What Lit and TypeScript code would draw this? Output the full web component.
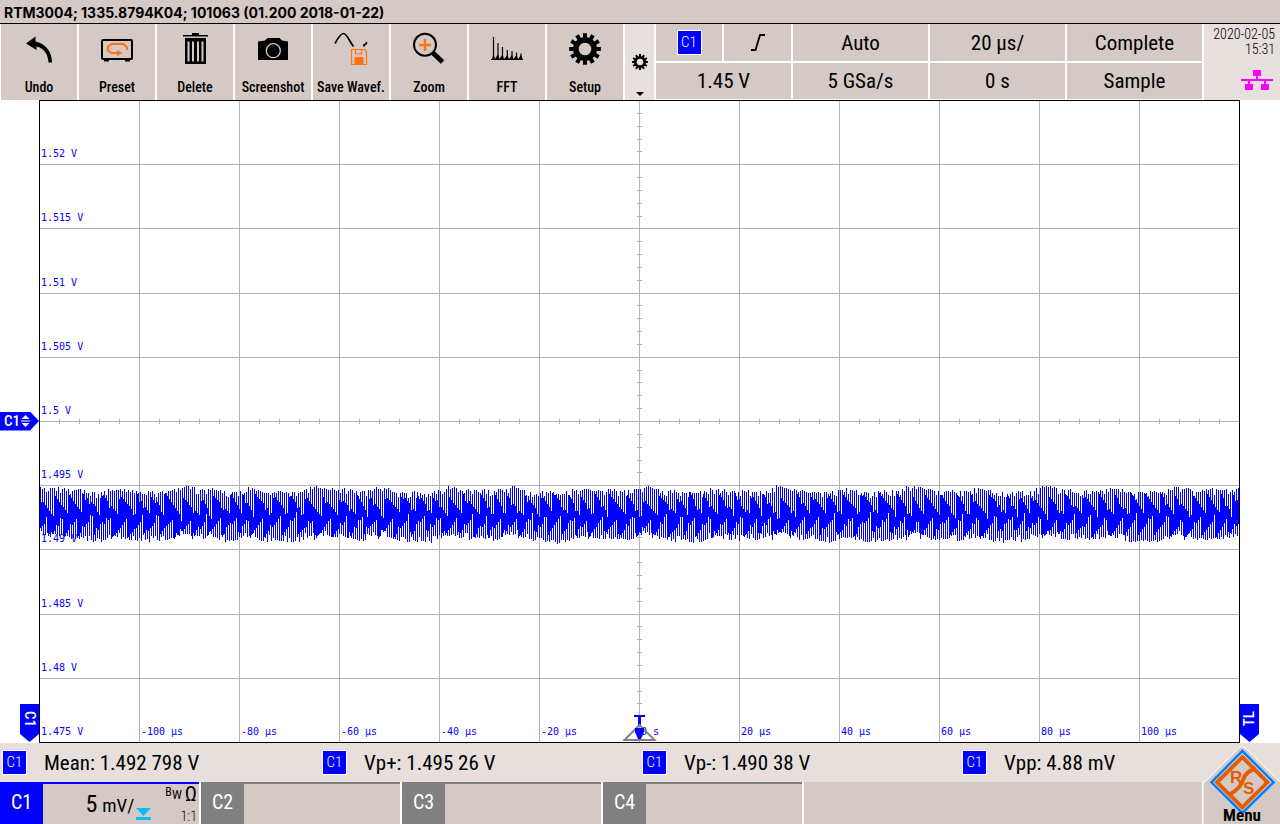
import { LitElement, html, svg, css } from "lit";
import { customElement } from "lit/decorators.js";

const PLOT_W = 1201;
const PLOT_H = 643;
const DIV_X = 100;
const DIV_Y = 64.2;

const range = (n: number) => Array.from({ length: n }, (_, i) => i);

/* Switching ripple: every other column is a full swing, the ones between follow a sawtooth beat. */
function wavePath(): string {
  let d = "";
  let seed = 7;
  const rnd = () => {
    seed = (seed * 16807) % 2147483647;
    return seed / 2147483647;
  };
  let phase = 0;
  let step = 1 / 15;
  for (let x = 1; x < PLOT_W - 1; x++) {
    const slow = 2.5 * Math.sin(x / 10.5) + 2 * Math.sin(x / 23 + 1) + 1.5 * Math.sin(x / 5.3);
    phase += step;
    if (phase >= 1) {
      phase = 0;
      step = 1 / (11 + rnd() * 7);
    }
    const late = (phase + 0.45) % 1;
    let top: number;
    let bottom: number;
    if (x % 2) {
      top = 389 - slow * 0.7 + rnd() * 3;
      bottom = 438 - late * 21 + slow * 0.5;
    } else {
      top = 394 + phase * 21 + slow * 0.5;
      bottom = 437 - slow * 0.9 + rnd() * 3;
    }
    if (rnd() < 0.25) {
      top += 4;
      bottom -= 4;
    }
    d += `M${x + 0.5} ${Math.round(Math.max(top, 384))}V${Math.round(Math.min(bottom, 444))}`;
  }
  return d;
}

function gearPath(c: number, outer: number, inner: number, hole: number): string {
  const teeth = 12;
  const pts: string[] = [];
  for (let i = 0; i < teeth; i++) {
    const a = (i * 2 * Math.PI) / teeth - Math.PI / 2;
    for (const [off, r] of [[-0.16, inner], [-0.13, outer], [0.13, outer], [0.16, inner]]) {
      pts.push(`${(c + r * Math.cos(a + off)).toFixed(2)} ${(c + r * Math.sin(a + off)).toFixed(2)}`);
    }
  }
  return `M${pts.join("L")}ZM${c - hole} ${c}a${hole} ${hole} 0 1 0 ${2 * hole} 0a${hole} ${hole} 0 1 0 ${-2 * hole} 0Z`;
}

const icons: Record<string, unknown> = {
  Undo: svg`<path d="M11 17.500L20.500 10.500V15.500C30 17.500 37 25 37 36.500H33.500C33 28 29 22 21.500 20.500V24Z" fill="#000"/>`,
  Preset: svg`
    <rect x="9" y="14" width="30" height="19" rx="1" fill="none" stroke="#000" stroke-width="2"/>
    <path d="M11 33h5v2.500h-5zM32 33h5v2.500h-5z" fill="#000"/>
    <path d="M34 24V21.500L30.500 18H19L14.800 20.500V24.500L18.500 27H25" fill="none" stroke="#ff7310" stroke-width="2"/>
    <path d="M24 24L29.500 27L24 30Z" fill="#ff7310"/>`,
  Delete: svg`
    <path d="M12 9H21V7H28V9H37V10.500H12Z" fill="#000"/>
    <path fill-rule="evenodd" d="M14 12H35V38H14ZM16.500 15.500V35.500H18.500V15.500ZM21 15.500V35.500H23V15.500ZM26 15.500V35.500H28V15.500ZM30.500 15.500V35.500H32.500V15.500Z" fill="#000"/>`,
  Screenshot: svg`
    <path d="M9 15.500L16 14.500L18.500 12H30.500L33 14.500L39 15.500V34H9Z" fill="#000"/>
    <circle cx="24.300" cy="24.700" r="7" fill="none" stroke="#d4c9c4" stroke-width="1.300"/>`,
  "Save Wavef.": svg`
    <path d="M8 17.500C12 10 14 7.500 16.500 7.500C20 7.500 22 15 26.500 20.500M36.500 20.500L37.500 18.500L39 18L39.700 16" fill="none" stroke="#000" stroke-width="1.700"/>
    <path d="M24.500 23.500H37.500L39.500 25.500V38.500H24.500ZM28.500 23.500V28H34.500V23.500" fill="none" stroke="#ff7310" stroke-width="1.200"/>
    <path d="M27.500 31H36.500V38H27.500Z" fill="#ff7310"/>`,
  Zoom: svg`
    <circle cx="20" cy="18.700" r="11" fill="none" stroke="#000" stroke-width="2"/>
    <path d="M20 13V25M14 19H26" stroke="#ff7310" stroke-width="2.500"/>
    <path d="M27.500 26.500L37.500 36" stroke="#000" stroke-width="5"/>`,
  FFT: svg`
    <path d="M8 33.500H40M10.500 11V33M15 17V33M19.500 21V33M24.300 24V33M29 25V33M33.500 26.500V33M38 27.500V33" stroke="#000" stroke-width="1.200"/>
    <path d="M9 33L10.500 28L12 33L15 28L16.500 33L19.500 28L21 33L24.300 29L26 33L29 29L30.500 33L33.500 29L35 33L38 29L39.500 33Z" fill="#000"/>`,
  Setup: svg`<path d="${gearPath(24, 16, 12, 6.3)}" transform="translate(0 -1)" fill="#000" fill-rule="evenodd"/>`,
};

@customElement("app-root")
export class AppRoot extends LitElement {
  static styles = css`
    :host {
      --panel: #d4c9c4;
      --light: #e6dfdc;
      --blue: #0000ff;
      display: flex;
      flex-direction: column;
      min-height: 100vh;
      background: #fff;
      color: #000;
      font-family: "Roboto Condensed", Roboto, "Liberation Sans", sans-serif;
    }
    * { box-sizing: border-box; }
    svg { display: block; }
    button {
      appearance: none;
      border: 0;
      margin: 0;
      padding: 0;
      border-radius: 0;
      background: var(--panel);
      color: inherit;
      font-family: inherit;
    }
    .title {
      margin: 0;
      height: 24px;
      padding: 2px 4px 0;
      background: var(--panel);
      border-bottom: 1px solid #000;
      font: 700 14px/22px Inter, "Liberation Sans", Arial, sans-serif;
      white-space: nowrap;
    }
    .toolbar {
      display: grid;
      grid-template-columns: repeat(8, 76fr) 29px 546fr 76px;
      column-gap: 2px;
      height: 76px;
      padding-left: 1px;
    }
    .tool {
      display: flex;
      flex-direction: column;
      align-items: center;
      padding-top: 2px;
      min-width: 0;
      font-size: 14px;
      font-weight: 500;
      line-height: 26px;
      white-space: nowrap;
    }
    .more {
      display: flex;
      flex-direction: column;
      align-items: center;
      justify-content: flex-end;
      gap: 22px;
      padding-bottom: 4px;
      background: var(--light);
    }
    .params {
      display: grid;
      grid-template-columns: repeat(4, 1fr);
      grid-template-rows: 37px 36px;
      gap: 2px;
    }
    .params button { font-size: 21px; line-height: 36px; }
    .split {
      display: grid;
      grid-template-columns: 66fr 67fr;
      gap: 2px;
    }
    .split button {
      display: flex;
      align-items: center;
      justify-content: center;
    }
    .badge {
      display: block;
      width: 25px;
      height: 25px;
      border: 1px solid #fff;
      background: var(--blue);
      color: #fff;
      font-size: 15px;
      font-weight: 300;
      line-height: 23px;
      text-align: center;
      flex: none;
    }
    .params .badge { font-size: 15px; line-height: 23px; }
    .status {
      display: flex;
      flex-direction: column;
      align-items: flex-end;
      padding: 3px 5px 0 0;
      background: var(--light);
      font-size: 14px;
      font-weight: 300;
      line-height: 15px;
      white-space: nowrap;
    }
    .lan { margin: 13px 2px 0 0; }
    .scope {
      flex: 1;
      display: grid;
      grid-template-columns: 39px 1fr 40px;
      min-height: 300px;
    }
    .side { position: relative; }
    .level {
      position: absolute;
      left: 0;
      top: 50%;
      width: 39px;
      height: 19px;
      margin-top: -10px;
      padding-left: 4px;
      display: flex;
      align-items: center;
      gap: 1px;
      background: var(--blue);
      clip-path: polygon(0 0, 30px 0, 100% 50%, 30px 100%, 0 100%);
      color: #fff;
      font-size: 15px;
      font-weight: 500;
    }
    .flag {
      position: absolute;
      bottom: 1px;
      width: 19px;
      height: 38px;
      padding-bottom: 8px;
      background: var(--blue);
      clip-path: polygon(0 0, 100% 0, 100% 30px, 50% 100%, 0 30px);
      color: #fff;
      display: flex;
      align-items: center;
      justify-content: center;
      font-size: 15px;
      font-weight: 500;
      line-height: 19px;
    }
    .flag.left { right: 0; }
    .flag.right { left: 0; }
    .vertical { writing-mode: vertical-rl; }
    .vertical.up { transform: rotate(180deg); }
    .plot { position: relative; }
    .layer {
      position: absolute;
      inset: 0;
      width: 100%;
      height: 100%;
    }
    .labels {
      display: grid;
      padding: 0 1px 1px 0;
      color: var(--blue);
      font: 10px/20px "DejaVu Sans Mono", monospace;
      white-space: pre;
    }
    .labels span { align-self: end; padding-left: 2px; }
    .volts { grid-template-rows: repeat(10, 1fr); }
    .times { grid-template-columns: repeat(12, 1fr); }
    .trigger {
      position: absolute;
      left: calc(50% - 17px);
      bottom: 0;
    }
    .measures {
      display: grid;
      grid-template-columns: repeat(4, 1fr);
      height: 39px;
      background: var(--light);
    }
    .measure {
      display: flex;
      align-items: center;
      gap: 17px;
      padding-left: 2px;
      font-size: 21px;
      line-height: 38px;
      white-space: nowrap;
    }
    .measure .badge { line-height: 23px; }
    .channels {
      display: grid;
      grid-template-columns: repeat(4, 199fr) 398fr 76px;
      grid-template-rows: 42px;
      gap: 2px;
    }
    .channel {
      --accent: #808080;
      display: flex;
      border-top: 2px solid var(--accent);
      text-align: left;
      min-width: 0;
    }
    .channel.on { --accent: var(--blue); }
    .name {
      align-self: stretch;
      width: 43px;
      background: var(--accent);
      color: #fff;
      font-size: 20px;
      line-height: 37px;
      text-align: center;
    }
    .scale {
      flex: 1;
      display: flex;
      align-items: baseline;
      justify-content: flex-end;
      gap: 5px;
      font-size: 24px;
      line-height: 40px;
    }
    .scale small { font-size: 19px; }
    .offset { align-self: flex-end; margin: 0 14px 4px 2px; }
    .coupling {
      display: flex;
      flex-direction: column;
      align-items: flex-end;
      padding-right: 2px;
      font-size: 14px;
      font-weight: 300;
      line-height: 16px;
    }
    .coupling .row {
      display: flex;
      align-items: flex-start;
      gap: 3px;
      height: 24px;
    }
    .bw { font-size: 12px; font-weight: 400; line-height: 16px; }
    .bw sub { font-size: 13px; line-height: 0; }
    .ohm { font-size: 21px; font-weight: 400; line-height: 20px; }
    .blank { background: var(--panel); }
    .menu {
      position: relative;
      font-size: 17px;
      font-weight: bold;
      line-height: 17px;
    }
    .emblem { position: absolute; right: 0; bottom: 0; }
    .menu span {
      position: absolute;
      left: 0;
      right: 0;
      bottom: 0;
    }
  `;

  private wave = wavePath();

  private grid() {
    const cx = 600.5;
    const cy = 321.5;
    return svg`
      <g stroke="#b2b2b2" stroke-width="1" shape-rendering="crispEdges">
        ${range(11).map((i) => svg`<line x1=${(i + 1) * DIV_X + 0.5} x2=${(i + 1) * DIV_X + 0.5} y1="0" y2=${PLOT_H}/>`)}
        ${range(9).map((i) => {
          const y = Math.round((i + 1) * DIV_Y) + 0.5;
          return svg`<line x1="0" x2=${PLOT_W} y1=${y} y2=${y}/>`;
        })}
        ${range(59).map((i) => svg`<line x1=${(i + 1) * 20 + 0.5} x2=${(i + 1) * 20 + 0.5} y1=${cy - 2.5} y2=${cy + 2.5}/>`)}
        ${range(49).map((i) => {
          const y = Math.round((i + 1) * 12.84) + 0.5;
          return svg`<line x1=${cx - 2.5} x2=${cx + 2.5} y1=${y} y2=${y}/>`;
        })}
      </g>`;
  }

  private tool(label: string) {
    return html`<button class="tool">
      <svg width="48" height="48" viewBox="0 0 48 48" aria-hidden="true">${icons[label]}</svg>
      <span>${label}</span>
    </button>`;
  }

  private channel(name: string) {
    return html`<button class="channel"><span class="name">${name}</span></button>`;
  }

  render() {
    const volts = ["1.52", "1.515", "1.51", "1.505", "1.5", "1.495", "1.49", "1.485", "1.48", "1.475"];
    const times = ["", "-100 µs", "-80 µs", "-60 µs", "-40 µs", "-20 µs", "0 s", "20 µs", "40 µs", "60 µs", "80 µs", "100 µs"];
    const measures = ["Mean: 1.492 798 V", "Vp+: 1.495 26 V", "Vp-: 1.490 38 V", "Vpp: 4.88 mV"];
    return html`
      <h1 class="title">RTM3004; 1335.8794K04; 101063 (01.200 2018-01-22)</h1>
      <div class="toolbar">
        ${Object.keys(icons).map((k) => this.tool(k))}
        <button class="more" aria-label="Toolbar settings">
          <svg width="16" height="16" viewBox="0 0 16 16"><path d="${gearPath(8, 8, 6, 3.3)}" fill-rule="evenodd"/></svg>
          <svg width="8" height="4" viewBox="0 0 8 4"><path d="M0 0H8L4 4Z"/></svg>
        </button>
        <div class="params">
          <div class="split">
            <button aria-label="Trigger source"><span class="badge">C1</span></button>
            <button aria-label="Trigger slope">
              <svg width="14" height="17" viewBox="0 0 14 17">
                <path d="M0 16H4.500L9 1H14" fill="none" stroke="#000" stroke-width="1.800"/>
              </svg>
            </button>
          </div>
          <button>Auto</button>
          <button>20 µs/</button>
          <button>Complete</button>
          <button>1.45 V</button>
          <button>5 GSa/s</button>
          <button>0 s</button>
          <button>Sample</button>
        </div>
        <div class="status">
          <span>2020-02-05</span>
          <span>15:31</span>
          <svg class="lan" width="32" height="20" viewBox="0 0 32 20" aria-hidden="true">
            <path fill="#ff00ff" d="M12 0h8v6h-3v3h15v2h-7v3h3v6h-8v-6h3v-3H9v3h3v6H4v-6h3v-3H0V9h15V6h-3z"/>
          </svg>
        </div>
      </div>

      <main class="scope">
        <div class="side">
          <button class="level">C1
            <svg width="9" height="12" viewBox="0 0 9 12"><path d="M4.500 0L8.500 4H0.500ZM4.500 12L0.500 8H8.500ZM0 5.500H9V6.500H0Z" fill="#fff"/></svg>
          </button>
          <button class="flag left"><span class="vertical">C1</span></button>
        </div>
        <div class="plot">
          <svg class="layer" viewBox="0 0 ${PLOT_W} ${PLOT_H}" preserveAspectRatio="none">
            ${this.grid()}
            <rect x="0.5" y="0.5" width=${PLOT_W - 1} height=${PLOT_H - 1} fill="none" stroke="#000"/>
          </svg>
          <div class="layer labels volts">${volts.map((v) => html`<span>${v} V</span>`)}</div>
          <div class="layer labels times">${times.map((t) => html`<span>${t}</span>`)}</div>
          <svg class="layer" viewBox="0 0 ${PLOT_W} ${PLOT_H}" preserveAspectRatio="none">
            <path d=${this.wave} stroke="#0000ff" stroke-width="1" fill="none" shape-rendering="crispEdges"/>
          </svg>
          <svg class="trigger" width="34" height="28" viewBox="0 0 34 28">
            <path d="M11 0H22V2H18V11H15V2H11Z" fill="#0000ff"/>
            <path d="M16.500 10L31.500 25H1.500Z" fill="none" stroke="#808080" stroke-width="2"/>
            <path d="M12 13H21V17L18 24H15L12 17Z" fill="#0000ff"/>
          </svg>
        </div>
        <div class="side">
          <button class="flag right"><span class="vertical up">TL</span></button>
        </div>
      </main>

      <div class="measures">
        ${measures.map((m) => html`<div class="measure"><span class="badge">C1</span><span>${m}</span></div>`)}
      </div>
      <div class="channels">
        <button class="channel on">
          <span class="name">C1</span>
          <span class="scale">5 <small>mV/</small></span>
          <svg class="offset" width="15" height="12" viewBox="0 0 15 12">
            <path d="M0 0H15L7.500 8ZM0 9H15V12H0Z" fill="#00bfff"/>
          </svg>
          <span class="coupling">
            <span class="row"><span class="bw">B<sub>W</sub></span><span class="ohm">Ω</span></span>
            <span>1:1</span>
          </span>
        </button>
        ${["C2", "C3", "C4"].map((c) => this.channel(c))}
        <div class="blank"></div>
        <button class="menu">
          <svg class="emblem" width="78" height="78" viewBox="0 0 78 78">
            <path d="M1 36L4 35L38 1H42L77 36V78H1Z" fill="#d4c9c4"/>
            <path d="M1 78V36L4 35L38 1H42L78 36" fill="none" stroke="#fff" stroke-width="1"/>
            <path d="M40.300 5L71.500 36.300L40.300 67L9.500 36.300Z" fill="#e6dfdc" stroke="#0080ff" stroke-width="2.500"/>
            <path d="M40.300 11L65.500 36.300L40.300 61.500L15 36.300Z" fill="#d4c9c4" stroke="#e65c00" stroke-width="4"/>
            <path d="M54 23C47 24 43 28 41 34C39 41 34 45 27 49" fill="none" stroke="#e65c00" stroke-width="4"/>
            <g fill="#e65c00" font-family="Liberation Sans, Arial, sans-serif" font-size="17" font-weight="bold">
              <text x="28" y="37">R</text>
              <text x="41" y="48">S</text>
            </g>
          </svg>
          <span>Menu</span>
        </button>
      </div>
    `;
  }
}
